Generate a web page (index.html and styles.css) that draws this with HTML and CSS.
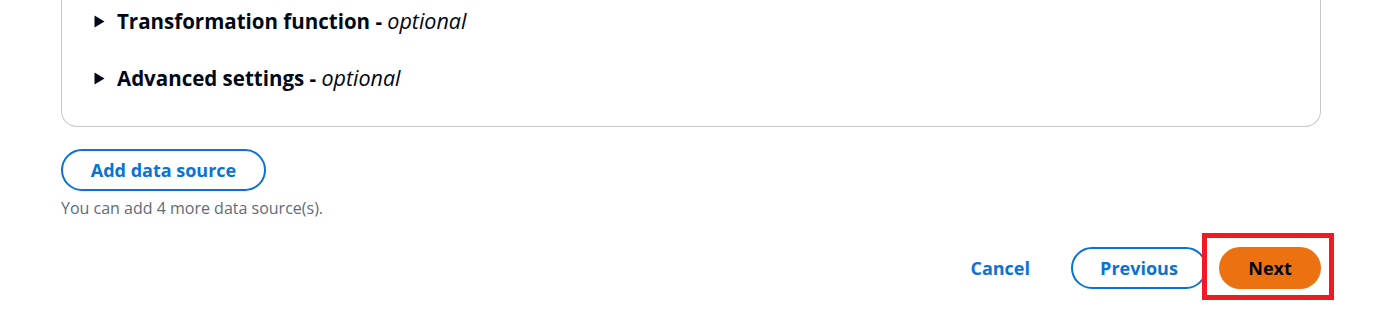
FILE: index.html
```html
<!DOCTYPE html>
<html>
<head>
<meta charset="utf-8">
<link rel="stylesheet" href="styles.css">
</head>
<body>
<div class="page">
  <div class="card">
    <div class="expander">
      <svg class="caret" width="11" height="13" viewBox="0 0 11 13"><path d="M0.5 0.5 L10.5 6.5 L0.5 12.5 Z" fill="#000716"/></svg>
      <span class="title">Transformation function - <em>optional</em></span>
    </div>
    <div class="expander">
      <svg class="caret" width="11" height="13" viewBox="0 0 11 13"><path d="M0.5 0.5 L10.5 6.5 L0.5 12.5 Z" fill="#000716"/></svg>
      <span class="title">Advanced settings - <em>optional</em></span>
    </div>
  </div>
  <div class="add-block">
    <button class="btn btn-normal add-btn">Add data source</button>
    <div class="hint">You can add 4 more data source(s).</div>
  </div>
  <div class="footer">
    <button class="btn btn-link">Cancel</button>
    <button class="btn btn-normal prev-btn">Previous</button>
    <div class="highlight">
      <button class="btn btn-primary next-btn">Next</button>
    </div>
  </div>
</div>
</body>
</html>
```

FILE: styles.css
```css
html, body {
  margin: 0;
  padding: 0;
  background: #ffffff;
}
body {
  font-family: "Open Sans", "Noto Sans", Arial, sans-serif;
  color: #000716;
}
.page {
  width: 1260px;
  padding-left: 61px;
}
.card {
  border: 1px solid #c6c6cd;
  border-top: none;
  border-radius: 0 0 16px 16px;
  padding: 9px 32px 36px 32px;
  display: flex;
  flex-direction: column;
  gap: 33px;
}
.expander {
  display: flex;
  align-items: center;
  gap: 12px;
  height: 24px;
}
.caret {
  display: block;
  margin-top: 1px;
}
.title {
  font-size: 20.5px;
  font-weight: 700;
  line-height: 24px;
}
.title em {
  font-size: 21.5px;
  font-weight: 400;
  font-style: italic;
}
.add-block {
  padding-top: 22px;
  display: flex;
  flex-direction: column;
  align-items: flex-start;
}
.btn {
  font-family: "Open Sans", "Noto Sans", Arial, sans-serif;
  font-size: 18px;
  font-weight: 700;
  height: 42px;
  border-radius: 21px;
  box-sizing: border-box;
  cursor: pointer;
  background: #ffffff;
  padding: 0 27px;
}
.btn-normal {
  border: 2px solid #0972d3;
  color: #0972d3;
}
.add-btn {
  width: 205px;
  padding: 0;
}
.hint {
  font-size: 16px;
  color: #5f6b7a;
  line-height: 22px;
  margin-top: 6px;
}
.footer {
  display: flex;
  justify-content: flex-end;
  align-items: flex-start;
  margin-top: 14px;
  margin-right: -13px;
}
.btn-link {
  border: none;
  color: #0972d3;
  background: transparent;
  padding: 0 20px;
  margin-right: 21px;
  margin-top: 14px;
}
.prev-btn {
  width: 136px;
  padding: 0;
  margin-top: 14px;
}
.highlight {
  border: 5px solid #ed1c24;
  padding: 9px 8px 6px 12px;
  margin-left: -5px;
}
.btn-primary {
  border: none;
  background: #ec7211;
  color: #000716;
}
.next-btn {
  width: 102px;
  padding: 0;
  display: block;
}
```
